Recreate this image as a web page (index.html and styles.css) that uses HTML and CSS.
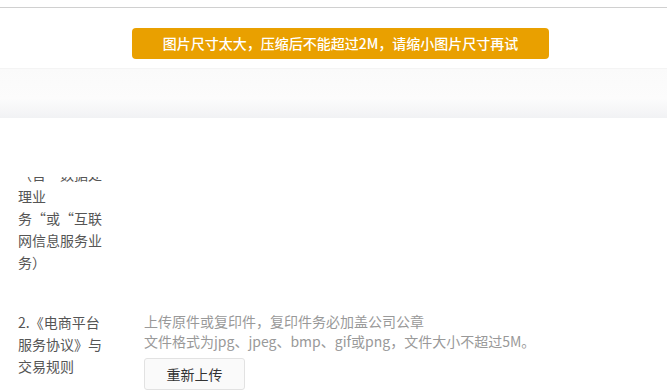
FILE: index.html
```html
<!DOCTYPE html>
<html lang="zh-CN">
   <head>
      <meta charset="UTF-8" />
      <meta name="viewport" content="width=device-width, initial-scale=1.0" />
      <title>资质上传</title>
      <link rel="stylesheet" href="styles.css">
   </head>
   <body>
      <div class="topbar"></div>
      <div class="toast-row">
         <div class="toast">图片尺寸太大，压缩后不能超过2M，请缩小图片尺寸再试</div>
      </div>
      <div class="tabbar"></div>
      <div class="scroll-area">
         <div class="list">
            <div class="row">
               <div class="label">
                  （含“数据处<br />
                  理业<br />
                  务“或“互联<br />
                  网信息服务业<br />
                  务）
               </div>
               <div class="field"></div>
            </div>
            <div class="row">
               <div class="label">
                  2.《电商平台<br />
                  服务协议》与<br />
                  交易规则
               </div>
               <div class="field">
                  <p class="tip">上传原件或复印件，复印件务必加盖公司公章</p>
                  <p class="tip">文件格式为jpg、jpeg、bmp、gif或png，文件大小不超过5M。</p>
                  <button class="upload-btn">重新上传</button>
               </div>
            </div>
         </div>
      </div>
   </body>
</html>
```

FILE: styles.css
```css
body {
   margin: 0;
   padding: 0;
   background-color: #fff;
   font-family: 'Noto Sans CJK SC', 'Liberation Sans', sans-serif;
   overflow: hidden;
}

div.topbar {
   height: 7px;
   border-bottom: 1px solid #d0d0d0;
}

div.toast-row {
   display: flex;
   justify-content: center;
   padding-top: 20px;
   padding-bottom: 9px;
}

div.toast {
   width: 417px;
   height: 31px;
   margin-left: 14px;
   border-radius: 4px;
   background-color: #e9a000;
   color: #fff;
   font-size: 14px;
   font-weight: 500;
   line-height: 31px;
   text-align: center;
}

div.tabbar {
   height: 49px;
   border-top: 1px solid #f4f4f4;
   background: linear-gradient(#fafafa, #fcfcfc 60%, #f1f2f4);
}

div.scroll-area {
   margin-top: 59px;
   height: 220px;
   overflow: hidden;
}

div.list {
   margin-top: -14px;
}

div.row {
   display: flex;
   margin-bottom: 38px;
}

div.label {
   width: 90px;
   margin-left: 18px;
   font-size: 14px;
   line-height: 22px;
   color: #555;
   white-space: nowrap;
}

div.field {
   margin-left: 36px;
}

p.tip {
   margin: 0;
   font-size: 14px;
   line-height: 20px;
   color: #999;
   white-space: nowrap;
}

button.upload-btn {
   margin-top: 7px;
   width: 101px;
   height: 32px;
   border: 1px solid #e2e2e2;
   border-radius: 3px;
   background-color: #fafafa;
   color: #333;
   font-size: 14px;
   font-family: 'Noto Sans CJK SC', 'Liberation Sans', sans-serif;
}
```
